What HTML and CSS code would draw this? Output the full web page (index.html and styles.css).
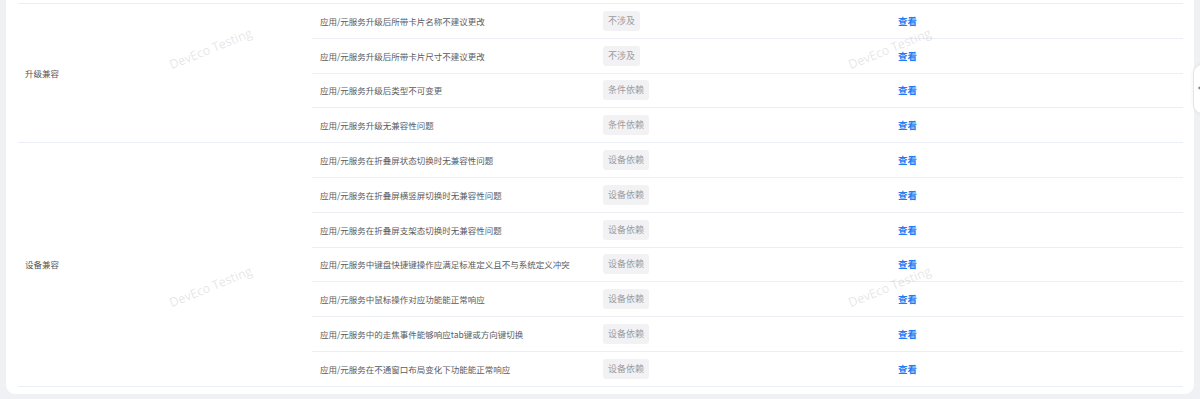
FILE: index.html
```html
<!DOCTYPE html>
<html lang="zh-CN">
<head>
<meta charset="utf-8">
<title>兼容性检查项</title>
<link rel="stylesheet" href="styles.css">
</head>
<body>
<div class="card">
  <table class="rules">
    <colgroup>
      <col class="c-cat"><col class="c-name"><col class="c-tag"><col class="c-act">
    </colgroup>
    <tbody>
      <tr>
        <td class="cat" rowspan="4">升级兼容</td>
        <td class="name">应用/元服务升级后所带卡片名称不建议更改</td>
        <td><span class="tag">不涉及</span></td>
        <td><a class="link">查看</a></td>
      </tr>
      <tr>
        <td class="name">应用/元服务升级后所带卡片尺寸不建议更改</td>
        <td><span class="tag">不涉及</span></td>
        <td><a class="link">查看</a></td>
      </tr>
      <tr>
        <td class="name">应用/元服务升级后类型不可变更</td>
        <td><span class="tag">条件依赖</span></td>
        <td><a class="link">查看</a></td>
      </tr>
      <tr>
        <td class="name">应用/元服务升级无兼容性问题</td>
        <td><span class="tag">条件依赖</span></td>
        <td><a class="link">查看</a></td>
      </tr>
      <tr>
        <td class="cat" rowspan="7">设备兼容</td>
        <td class="name">应用/元服务在折叠屏状态切换时无兼容性问题</td>
        <td><span class="tag">设备依赖</span></td>
        <td><a class="link">查看</a></td>
      </tr>
      <tr>
        <td class="name">应用/元服务在折叠屏横竖屏切换时无兼容性问题</td>
        <td><span class="tag">设备依赖</span></td>
        <td><a class="link">查看</a></td>
      </tr>
      <tr>
        <td class="name">应用/元服务在折叠屏支架态切换时无兼容性问题</td>
        <td><span class="tag">设备依赖</span></td>
        <td><a class="link">查看</a></td>
      </tr>
      <tr>
        <td class="name">应用/元服务中键盘快捷键操作应满足标准定义且不与系统定义冲突</td>
        <td><span class="tag">设备依赖</span></td>
        <td><a class="link">查看</a></td>
      </tr>
      <tr>
        <td class="name">应用/元服务中鼠标操作对应功能能正常响应</td>
        <td><span class="tag">设备依赖</span></td>
        <td><a class="link">查看</a></td>
      </tr>
      <tr>
        <td class="name">应用/元服务中的走焦事件能够响应tab键或方向键切换</td>
        <td><span class="tag">设备依赖</span></td>
        <td><a class="link">查看</a></td>
      </tr>
      <tr>
        <td class="name">应用/元服务在不通窗口布局变化下功能能正常响应</td>
        <td><span class="tag">设备依赖</span></td>
        <td><a class="link">查看</a></td>
      </tr>
    </tbody>
  </table>
</div>

<div class="watermark wm1">DevEco Testing</div>
<div class="watermark wm2">DevEco Testing</div>
<div class="watermark wm3">DevEco Testing</div>
<div class="watermark wm4">DevEco Testing</div>

<div class="side-handle"><span class="chev"></span></div>
</body>
</html>
```

FILE: styles.css
```css
html, body {
  margin: 0;
  padding: 0;
}
body {
  background: #f0f1f5;
  font-family: "Noto Sans CJK SC", "Noto Sans", sans-serif;
  width: 1200px;
  height: 399px;
  overflow: hidden;
  position: relative;
}
.card {
  margin: 0 6px 0 6px;
  background: #ffffff;
  border-radius: 0 0 9px 9px;
  padding: 3px 11px 7px 12px;
  height: 384px;
  box-sizing: content-box;
}
.rules {
  width: 1165px;
  border-collapse: collapse;
  table-layout: fixed;
  border-top: 1px solid #eceef5;
}
.c-cat { width: 294px; }
.c-name { width: 283px; }
.c-tag { width: 295px; }
.c-act { width: auto; }
.rules td {
  height: 33.8px;
  padding: 0 8px;
  border-bottom: 1px solid #eceef5;
  font-size: 8.5px;
  color: #5a5b60;
  vertical-align: middle;
  white-space: nowrap;
}
.rules td.cat {
  padding-left: 7px;
  color: #55565b;
}
.tag {
  display: inline-block;
  background: #f2f2f4;
  color: #9a9ba0;
  border-radius: 3px;
  padding: 0 5px;
  height: 20px;
  line-height: 20px;
  font-size: 9px;
}
.link {
  color: #1f7ef3;
  font-weight: 700;
  font-size: 9.5px;
  cursor: pointer;
}
.watermark {
  position: absolute;
  font-family: "Open Sans", "Liberation Sans", sans-serif;
  font-size: 12.5px;
  color: rgba(150, 150, 155, 0.25);
  transform: rotate(-22deg);
  transform-origin: left bottom;
  white-space: nowrap;
  pointer-events: none;
}
.wm1 { left: 173px; top: 56px; }
.wm2 { left: 852px; top: 56px; }
.wm3 { left: 173px; top: 294px; }
.wm4 { left: 852px; top: 294px; }
.side-handle {
  position: absolute;
  left: 1193px;
  top: 64px;
  width: 30px;
  height: 48px;
  background: #ffffff;
  border: 1px solid #e4e5ea;
  border-radius: 9px;
  box-shadow: 0 0 4px rgba(0,0,0,0.06);
}
.chev {
  position: absolute;
  left: 5px;
  top: 21px;
  width: 3px;
  height: 3px;
  border-left: 1px solid #777;
  border-bottom: 1px solid #777;
  transform: rotate(45deg);
}
```
